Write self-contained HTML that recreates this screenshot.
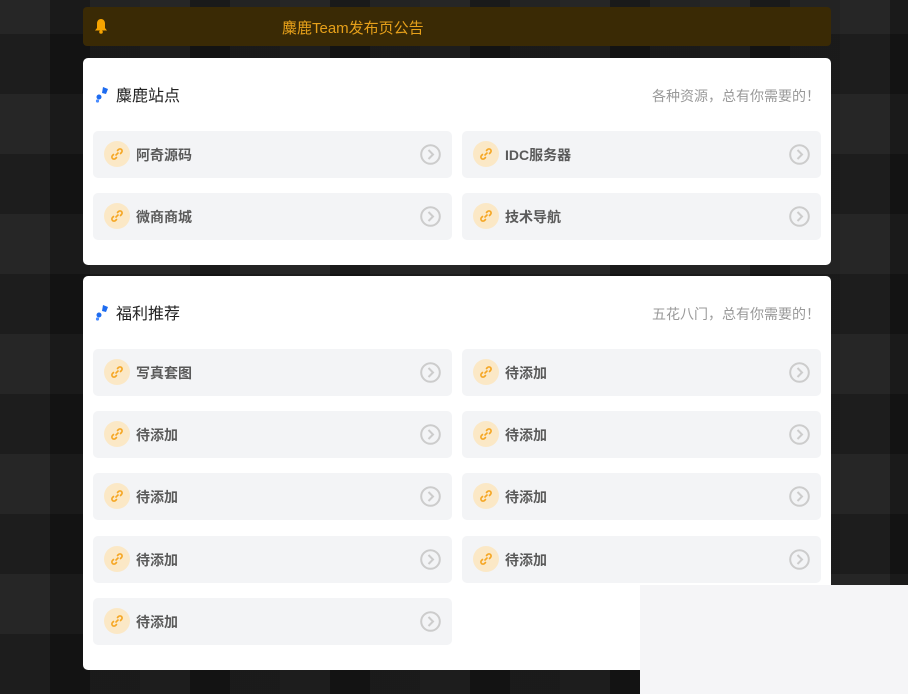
<!DOCTYPE html>
<html><head><meta charset="utf-8"><style>
*{margin:0;padding:0;box-sizing:border-box}
body{width:908px;height:694px;overflow:hidden;position:relative;font-family:"Liberation Sans","Noto Sans CJK SC",sans-serif;
background:#1b1b1b;background-image:repeating-linear-gradient(90deg,rgba(255,255,255,.03) 0 50px,rgba(0,0,0,.15) 50px 90px,rgba(255,255,255,.02) 90px 140px),repeating-linear-gradient(0deg,rgba(0,0,0,.2) 0 60px,rgba(255,255,255,.02) 60px 120px);}
.ban{position:absolute;left:83px;top:7px;width:748px;height:39px;background:#3a2a05;border-radius:4px}
.ban .t{position:absolute;left:199px;top:10px;font-size:15px;color:#e6a01a}
.bell{position:absolute;left:11px;top:11px}
.card{position:absolute;left:83px;width:748px;background:#fff;border-radius:5px}
.title{position:absolute;left:33px;font-size:16px;color:#222}
.pin{position:absolute;left:12px}
.sub{position:absolute;right:11px;font-size:14px;color:#999}
.item{position:absolute;width:359px;height:47px;background:#f3f4f6;border-radius:5px}
.ic{position:absolute;left:11px;top:10px;width:26px;height:26px;border-radius:50%;background:#fbe8c6}
.ic svg{position:absolute;left:6px;top:6px}
.lb{position:absolute;left:43px;top:14px;font-size:14px;font-weight:bold;color:#5a5a5a}
.ch{position:absolute;right:11px;top:13px}
.gray{position:absolute;left:640px;top:585px;width:268px;height:109px;background:#f5f5f7}
</style></head><body>
<div class="ban"><svg class="bell" width="14" height="16" viewBox="0 0 14 16"><path d="M7 1C4.5 1 3 3 3 5.5V10L1 12.5H13L11 10V5.5C11 3 9.5 1 7 1Z" fill="#f5a300"/><circle cx="7" cy="14" r="1.8" fill="#f5a300"/></svg><div class="t">麋鹿Team发布页公告</div></div>

<div class="card" style="top:58px;height:207px">
<svg class="pin" style="top:27px" width="16" height="18" viewBox="0 0 16 18"><path d="M8 2l5 2-2 5-4-1z" fill="#1e6cf0"/><circle cx="4" cy="12" r="2.5" fill="#1e6cf0"/><circle cx="2.5" cy="16" r="1.6" fill="#4a8cff"/></svg>
<div class="title" style="top:24px">麋鹿站点</div><div class="sub" style="top:28px">各种资源，总有你需要的！</div>
</div>
<div class="card" style="top:276px;height:394px">
<svg class="pin" style="top:27px" width="16" height="18" viewBox="0 0 16 18"><path d="M8 2l5 2-2 5-4-1z" fill="#1e6cf0"/><circle cx="4" cy="12" r="2.5" fill="#1e6cf0"/><circle cx="2.5" cy="16" r="1.6" fill="#4a8cff"/></svg>
<div class="title" style="top:24px">福利推荐</div><div class="sub" style="top:28px">五花八门，总有你需要的！</div>
</div>
<div id="items"></div>
<div class="gray"></div>
<script>
var L=[[93,131,"阿奇源码"],[462,131,"IDC服务器"],[93,193,"微商商城"],[462,193,"技术导航"],
[93,349,"写真套图"],[462,349,"待添加"],[93,411,"待添加"],[462,411,"待添加"],[93,473,"待添加"],[462,473,"待添加"],[93,536,"待添加"],[462,536,"待添加"],[93,598,"待添加"]];
var h="";L.forEach(function(a){h+='<div class="item" style="left:'+a[0]+'px;top:'+a[1]+'px"><div class="ic"><svg width="14" height="14" viewBox="0 0 14 14" fill="none" stroke="#f5a623" stroke-width="1.6" stroke-linecap="round"><path d="M6 8l2-2"/><path d="M7.5 3.5l1-1a2.1 2.1 0 013 3l-1 1"/><path d="M6.5 10.5l-1 1a2.1 2.1 0 01-3-3l1-1"/></svg></div><div class="lb">'+a[2]+'</div><svg class="ch" width="21" height="21" viewBox="0 0 21 21"><circle cx="10.5" cy="10.5" r="9.3" fill="none" stroke="#ccc" stroke-width="2"/><path d="M8.5 6l4.5 4.5-4.5 4.5" fill="none" stroke="#ccc" stroke-width="2"/></svg></div>'});
document.getElementById("items").innerHTML=h;
</script>
</body></html>
